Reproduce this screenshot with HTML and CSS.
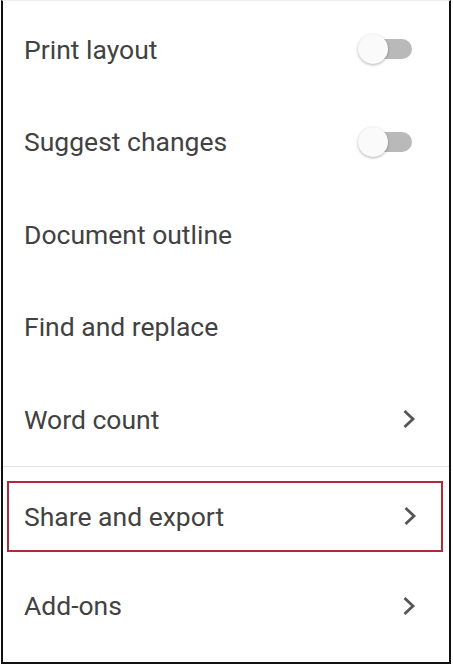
FILE: index.html
```html
<!DOCTYPE html>
<html lang="en">
<head>
  <meta charset="UTF-8">
  <meta name="viewport" content="width=device-width, initial-scale=1.0">
  <title>Menu</title>
  <link rel="stylesheet" href="styles.css">
</head>
<body>
  <div class="menu">
    <div class="item">
      <span class="label">Print layout</span>
      <span class="switch"><span class="thumb"></span></span>
    </div>
    <div class="item">
      <span class="label">Suggest changes</span>
      <span class="switch"><span class="thumb"></span></span>
    </div>
    <div class="item">
      <span class="label">Document outline</span>
    </div>
    <div class="item">
      <span class="label">Find and replace</span>
    </div>
    <div class="item">
      <span class="label">Word count</span>
      <svg class="chev" width="14" height="20" viewBox="0 0 14 20"><path d="M2.5 2 L11 10 L2.5 18" /></svg>
    </div>

    <div class="divider"></div>

    <div class="highlight-wrap">
      <div class="item highlight">
        <span class="label">Share and export</span>
        <svg class="chev" width="14" height="20" viewBox="0 0 14 20"><path d="M2.5 2 L11 10 L2.5 18" /></svg>
      </div>
    </div>
    <div class="item">
      <span class="label">Add-ons</span>
      <svg class="chev" width="14" height="20" viewBox="0 0 14 20"><path d="M2.5 2 L11 10 L2.5 18" /></svg>
    </div>
  </div>
</body>
</html>
```

FILE: styles.css
```css
body {
  margin: 0;
  background: white;
  font-family: Roboto, 'Noto Sans', sans-serif;
}

.menu {
  box-sizing: border-box;
  width: 450px;
  height: 664px;
  margin-left: 1px;
  padding-top: 2px;
  border-top: 1px solid #eee;
  border-left: 2px solid #111;
  border-right: 2px solid #111;
  border-bottom: 2px solid #111;
}

.item {
  display: flex;
  align-items: center;
  justify-content: space-between;
  height: 92.5px;
  padding: 0 33px 0 21px;
}

.label {
  font-size: 26.5px;
  color: #424242;
}

.switch {
  position: relative;
  width: 54px;
  height: 30px;
  margin-right: 4px;
}

.switch::before {
  content: "";
  position: absolute;
  left: 12px;
  right: 0;
  top: 5px;
  height: 20px;
  border-radius: 10px;
  background: #b9b9b9;
}

.thumb {
  position: absolute;
  left: 0;
  top: 0;
  width: 30px;
  height: 30px;
  border-radius: 50%;
  background: #fafafa;
  box-shadow: 0 1px 3px rgba(0,0,0,0.3);
}

.chev path {
  fill: none;
  stroke: #555;
  stroke-width: 2.8;
}

.divider {
  height: 1px;
  background: #e2e2e2;
}

.highlight-wrap {
  padding: 14px 6px 8px 4px;
}

.highlight {
  height: 67px;
  border: 2px solid #b02a3a;
  padding: 0 24px 0 15px;
}
```
